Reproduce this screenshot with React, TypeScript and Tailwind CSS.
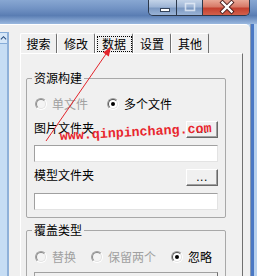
import React from "react";

function Radio({ checked, disabled }: { checked?: boolean; disabled?: boolean }) {
  return (
    <span className="w-[12px] h-[12px] rounded-full border border-t-[#a0a0a0] border-l-[#a0a0a0] border-b-white border-r-white flex shrink-0">
      <span
        className={`flex-1 rounded-full border flex items-center justify-center ${
          disabled
            ? "bg-[#f4f4f4] border-t-[#8a8a8a] border-l-[#8a8a8a] border-b-[#e3e3e3] border-r-[#e3e3e3]"
            : "bg-white border-t-[#555555] border-l-[#555555] border-b-[#e3e3e3] border-r-[#e3e3e3]"
        }`}
      >
        {checked && <span className="w-[4px] h-[4px] rounded-full bg-black" />}
      </span>
    </span>
  );
}

function RadioItem({ label, checked, disabled, className }: { label: string; checked?: boolean; disabled?: boolean; className?: string }) {
  return (
    <div className={`flex items-center gap-[5px] h-[14px] ${className ?? ""}`}>
      <Radio checked={checked} disabled={disabled} />
      <span className={`leading-[14px] whitespace-nowrap ${disabled ? "text-[#a0a0a0]" : "text-black"}`}>{label}</span>
    </div>
  );
}

function DotsButton() {
  return (
    <div className="w-[32px] h-[17px] bg-[#f0f0f0] border border-t-white border-l-white border-b-[#696969] border-r-[#696969] shadow-[inset_-1px_-1px_0_#a0a0a0] flex items-end justify-center pb-[2px]">
      <span className="font-['Liberation_Sans',sans-serif] text-[12px] leading-[12px] tracking-[0.5px] text-black">...</span>
    </div>
  );
}

function TextBox() {
  return <div className="h-[17px] bg-white border border-t-[#a0a0a0] border-l-[#a0a0a0] border-b-[#e3e3e3] border-r-[#e3e3e3]" />;
}

function GroupBox({ title, className, children }: { title: string; className?: string; children: React.ReactNode }) {
  return (
    <div className={`relative w-[200px] border border-[#a8a8a8] rounded-[2px] ${className ?? ""}`}>
      <span className="absolute left-[5px] -top-[8px] px-[2px] bg-[#f0f0f0] leading-[14px] text-black">{title}</span>
      {children}
    </div>
  );
}

const tabs = ["搜索", "修改", "数据", "设置", "其他"];
const tabWidths = ["w-[37px]", "w-[38px]", "w-[38px]", "w-[38px]", "w-[38px]"];

export default function App() {
  return (
    <div className="relative w-[257px] h-[276px] overflow-hidden bg-[#b7d1ee] font-['Noto_Sans_CJK_SC',sans-serif] text-[12px] text-black">
      {/* title bar */}
      <div className="h-[24px] flex justify-end pr-[7px] bg-[linear-gradient(180deg,#88a7d2_0%,#7293c4_35%,#5a7db3_65%,#9ab8df_100%)]">
        <div className="flex h-[16px] border border-t-0 border-[#2c394c] rounded-b-[5px] overflow-hidden">
          <div className="w-[28px] border-r border-[#2c394c] bg-[linear-gradient(180deg,#c3d3e8_0%,#9fb6d6_45%,#7c99c2_55%,#9ab3d6_100%)]">
            <svg width="28" height="15" viewBox="0 0 28 15">
              <rect x="11.5" y="8.5" width="9" height="3" fill="white" stroke="#34435a" strokeWidth="1" />
            </svg>
          </div>
          <div className="w-[26px] border-r border-[#2c394c] bg-[linear-gradient(180deg,#c3d3e8_0%,#9fb6d6_45%,#7c99c2_55%,#9ab3d6_100%)]">
            <svg width="26" height="15" viewBox="0 0 26 15">
              <rect x="8.5" y="3.5" width="9" height="7" fill="none" stroke="#e6eef7" strokeWidth="1.6" opacity="0.8" />
            </svg>
          </div>
          <div className="w-[46px] bg-[linear-gradient(180deg,#e9a897_0%,#d77a68_45%,#c4402f_55%,#d2604c_100%)]">
            <svg width="46" height="15" viewBox="0 0 46 15">
              <path d="M19.5 2.5 L28.5 11.5 M28.5 2.5 L19.5 11.5" stroke="#4a2020" strokeWidth="4.2" strokeLinecap="square" />
              <path d="M19.5 2.5 L28.5 11.5 M28.5 2.5 L19.5 11.5" stroke="white" strokeWidth="2.4" strokeLinecap="square" />
            </svg>
          </div>
        </div>
      </div>

      {/* body */}
      <div className="flex h-[252px]">
        {/* client area */}
        <div className="w-[250px] bg-[#f0f0f0] border-t border-white rounded-tr-[5px] flex">
          {/* left scroll strip */}
          <div className="w-[9px] flex flex-col pt-[7px]">
            <div className="flex-1 w-[9px] bg-[#c6ddf4] border-r-2 border-r-[#8fb1d9] flex flex-col">
              <div className="h-[12px] border-t border-b border-[#86acd8] bg-[#d6e7f8] flex items-center">
                <svg width="8" height="10" viewBox="0 0 8 10">
                  <path d="M1 6.5 L4 3.5 L7 6.5" fill="none" stroke="#2a4f80" strokeWidth="1.3" />
                </svg>
              </div>
            </div>
          </div>

          {/* tab control */}
          <div className="ml-[11px] w-[223px] mt-[8px] flex flex-col">
            <div className="flex h-[20px]">
              {tabs.map((t, i) => (
                <div
                  key={t}
                  className={`${tabWidths[i]} h-[20px] border-t border-l border-t-white border-l-white border-r border-r-[#707070] rounded-t-[2px] flex items-center justify-center`}
                >
                  {i === 2 ? (
                    <span className="w-[35px] h-[16px] border border-dotted border-black flex items-center justify-center leading-[14px]">{t}</span>
                  ) : (
                    <span className="leading-[14px]">{t}</span>
                  )}
                </div>
              ))}
            </div>
            <div className="flex-1 border-l border-t border-l-white border-t-white border-r border-r-[#707070] pl-[5px] pt-[24px]">
              <GroupBox title="资源构建" className="h-[140px] px-[7px] pt-[18px]">
                <div className="flex">
                  <RadioItem label="单文件" disabled className="ml-[1px] w-[72px]" />
                  <RadioItem label="多个文件" checked />
                </div>
                <div className="mt-[10px] flex justify-between items-start">
                  <span className="mt-[1px] leading-[12px]">图片文件夹</span>
                  <DotsButton />
                </div>
                <div className="mt-[7px]">
                  <TextBox />
                </div>
                <div className="mt-[7px] flex justify-between items-start">
                  <span className="leading-[12px]">模型文件夹</span>
                  <DotsButton />
                </div>
                <div className="mt-[7px]">
                  <TextBox />
                </div>
              </GroupBox>

              <GroupBox title="覆盖类型" className="mt-[12px] h-[60px] px-[7px] pt-[19px]">
                <div className="flex">
                  <RadioItem label="替换" disabled className="ml-[1px] w-[56px]" />
                  <RadioItem label="保留两个" disabled className="w-[80px]" />
                  <RadioItem label="忽略" checked />
                </div>
                <div className="mt-[8px] h-[12px] border-t border-l border-t-[#a0a0a0] border-l-[#a0a0a0] border-r border-r-[#707070]" />
              </GroupBox>
            </div>
          </div>
        </div>

        {/* right frame */}
        <div className="flex-1 flex">
          <div className="w-[1px] bg-[#8c9cb2]" />
          <div className="w-[3px] bg-[#4a78c4]" />
          <div className="flex-1 bg-[#b7d1ee]" />
        </div>
      </div>

      {/* annotation overlay */}
      <svg className="absolute inset-0 pointer-events-none" width="257" height="276" viewBox="0 0 257 276">
        <line x1="46" y1="141" x2="106" y2="54" stroke="#e3242b" strokeWidth="1" />
        <polygon points="111,47 108.8,56.4 103,52.4" fill="#e3242b" />
      </svg>
      <div className="absolute left-[60px] top-[130px] -rotate-3 origin-[0%_78%] font-['Liberation_Mono',monospace] font-bold text-[13.33px] leading-[13.33px] text-[#e8262e] whitespace-nowrap pointer-events-none">
        www.qinpinchang.com
      </div>
    </div>
  );
}
